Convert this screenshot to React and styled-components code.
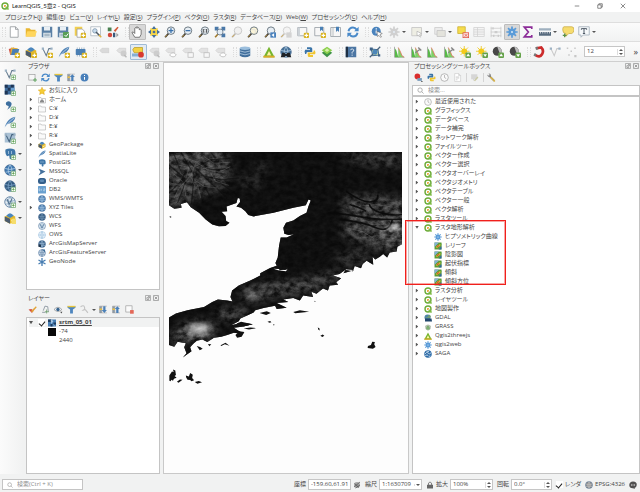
import React from 'react';
import styled, { createGlobalStyle, css } from 'styled-components';

const GlobalStyle = createGlobalStyle`
  * {
    box-sizing: border-box;
  }

  body {
    margin: 0;
    background: #f1f2f2;
    color: #444;
    font: 6px/9px 'Open Sans', 'Noto Sans CJK JP', sans-serif;
    font-kerning: normal;
    font-feature-settings: 'palt';
  }

  button,
  input,
  select {
    margin: 0;
    padding: 0;
    border: 0;
    background: none;
    color: inherit;
    font: inherit;
    font-feature-settings: inherit;
  }
`;

/* ---------- glyphs ---------- */

const Plus = () => (
  <g>
    <rect x="9.5" y="9.5" width="6" height="6" rx="1" fill="#fff" stroke="#5a9a5a" />
    <path d="M12.5 10.8v3.4M10.8 12.5h3.4" stroke="#4d9a3c" />
  </g>
);

const Star = () => (
  <g>
    <rect x="9" y="9" width="7" height="7" rx="1.5" fill="#d9b21c" />
    <path d="M12.5 10v5M10 12.5h5" stroke="#fff" strokeWidth="1.4" />
  </g>
);

const Lens = ({ tint = '#e6edf3', stroke = '#63707a', handle = '#2f2f2f' }) => (
  <g>
    <path d="M6 10 1.5 15" stroke={handle} strokeWidth="2.4" />
    <path d="M4.6 11.5 1.6 14.8" stroke="#d8a63a" strokeWidth="1" />
    <circle cx="9.3" cy="6.2" r="5" fill={tint} stroke={stroke} strokeWidth="1.2" />
  </g>
);

const Globe = ({ fill = '#3f78b0', line = '#b8d3ea' }) => (
  <g>
    <circle cx="8" cy="8" r="7" fill={fill} stroke="#466b92" />
    <path
      d="M1.5 6Q8 8.5 14.5 6M2 11q6-2 12 0M8 1Q3 8 8 15M8 1q5 7 0 14"
      fill="none"
      stroke={line}
    />
  </g>
);

const Histogram = () => (
  <g>
    <path d="M2 1v14h13" fill="none" stroke="#999" />
    <path d="M2.5 15V3l2 3 2 7 2 2z" fill="#57b848" />
    <path d="M7 15V2l3 6 2 5 3 2z" fill="#7ed067" />
    <path d="M7 2l3 6 2 5 3 2" fill="none" stroke="#e46a5a" />
  </g>
);

const Tag = ({ fill = '#c9c9c9' }) => (
  <path d="M1 6l3-3h9v6H4z" fill={fill} stroke="#c3c3c3" strokeWidth="0.6" />
);

const Doc = ({ stroke = '#8b9094' }) => (
  <path d="M3 1h7l3.5 3.5V15H3zM10 1v3.5h3.5" fill="#fff" stroke={stroke} />
);

const Floppy = () => (
  <g>
    <path d="M1 1h14v14H1z" fill="#5b80a5" />
    <rect x="4" y="1" width="8" height="5" fill="#e9eff4" />
    <rect x="3" y="9" width="10" height="6" fill="#dce5ec" />
    <path d="M4.5 11h7M4.5 13h7" stroke="#7f95a8" />
  </g>
);

const Feather = () => (
  <g>
    <path d="M1 15C3 8 8 2 15 1c0 5-5 9-11 10z" fill="#4f82b5" />
    <path d="M1 15Q6 8 14 2" fill="none" stroke="#d5e4f1" strokeWidth="0.9" />
  </g>
);

const Cube = () => (
  <g>
    <path d="M1 6l7-3 7 3v6l-7 3.5L1 12z" fill="#e3b72b" />
    <path d="M1 6l7 3v6.5L1 12z" fill="#4c5c6e" />
    <path d="M3 5q5-7 10 0l-5 3z" fill="#4b86bd" />
    <path d="M9.5 10.5l4-2v2l-4 2z" fill="#fff3b5" />
  </g>
);

const Elephant = () => (
  <g>
    <path d="M2 2q6-3 12 0 2 3 1 8l-3 1-1-1v4q-2 2-3.500 0L7 10l-3 1q-3-3-2-9z" fill="#3e76a8" />
    <path d="M6 4v4M10 4v4" stroke="#b6d0e5" />
  </g>
);

const Vee = ({ stroke = '#63798d' }) => (
  <g>
    <path d="M2.500 3.500 7 13 10.500 3.500h3" fill="none" stroke={stroke} strokeWidth="1.4" />
    <path d="M1 2h3v3H1zM12.500 2h3v3h-3z" fill="#9db2c4" />
  </g>
);

const Python = () => (
  <g>
    <path d="M4 1.500h5q2 0 2 2V8H5q-2 0-2 2.500H1.500Q0 7 1.500 5H8V4H4z" fill="#3b74a8" />
    <path d="M12 14.500H7q-2 0-2-2V8.500h6q2 0 2-2.500h1.500q1.500 3 0 5H8v1h4z" fill="#f0c530" />
  </g>
);

const Gear = ({ fill = '#5a9bd8' }) => (
  <g stroke={fill} strokeWidth="2.300">
    <path d="M8 .5v15M.5 8h15M2.700 2.700l10.600 10.600M13.300 2.700 2.700 13.300" />
    <circle cx="8" cy="8" r="3.600" fill={fill} />
    <circle cx="8" cy="8" r="1.200" fill="#e7f1fa" stroke="none" />
  </g>
);

const Sun = ({ up }) => (
  <g>
    <path d="M7 0v14M0 7h14M2 2l10 10M12 2 2 12" stroke="#edc92c" strokeWidth="1.200" />
    <circle cx="7" cy="7" r="3.800" fill="#f3cb1b" />
    <rect x="8.500" y="8.500" width="7.500" height="7.500" rx="1.500" fill="#65a24a" />
    <path d={up ? 'M12.200 10l2.500 3.500H9.800z' : 'M12.200 14.500l2.500-3.500H9.800z'} fill="#fff" />
  </g>
);

const Contrast = ({ up }) => (
  <g>
    <circle cx="7" cy="7" r="6" fill="#484848" />
    <path d="M7 1a6 6 0 0 1 4 10.500z" fill="#bdbdbd" />
    <rect x="8.500" y="8.500" width="7.500" height="7.500" rx="1.500" fill="#65a24a" />
    <path d={up ? 'M12.200 10l2.500 3.500H9.800z' : 'M12.200 14.500l2.500-3.500H9.800z'} fill="#fff" />
  </g>
);

const Funnel = () => (
  <g>
    <path d="M1 2h14v3l-4.500 3v7h-5V8L1 5z" fill="#4d86bf" />
    <path d="M1 1.500h14v2.500H1z" fill="#e8c63c" />
  </g>
);

const Sync = () => (
  <g fill="none" stroke="#4a8ac9" strokeWidth="2.600">
    <path d="M2 7q1-5 6-5 3 0 5 3M14 9q-1 5-6 5-3 0-5-3" />
    <path d="M15.500 1v6h-6zM.5 15V9h6z" fill="#4a8ac9" stroke="none" />
  </g>
);

const glyphs = {
  qgis: (
    <g>
      <circle cx="8" cy="8" r="6" fill="#fff" stroke="#6cab38" strokeWidth="2.800" />
      <path d="M9 9h2.500l4 4v2.500H13l-4-4z" fill="#7dbb45" />
      <path d="M6 6h4v2L8 10H6z" fill="#f0a94a" />
    </g>
  ),
  new: <Doc />,
  open: (
    <g>
      <path d="M1 3h5l2 2h6v9H1z" fill="#e9b632" />
      <path d="M3 7h13l-3 7H1z" fill="#ffd65c" />
    </g>
  ),
  save: <Floppy />,
  saveAs: (
    <g>
      <Floppy />
      <rect x="8" y="8" width="8" height="8" rx="1" fill="#5a9f56" />
      <path d="M10 12l2 2 3-4" fill="none" stroke="#fff" strokeWidth="1.300" />
    </g>
  ),
  layoutNew: (
    <g>
      <path d="M1 1h10v12H1z" fill="#f2cf4f" />
      <path d="M4 4h7l3 3v8H4z" fill="#fff" stroke="#999" />
      <Star />
    </g>
  ),
  layouts: (
    <g>
      <path d="M1 1h13v12H1z" fill="#fff" stroke="#a7b2ba" />
      <circle cx="6.500" cy="6.500" r="3" fill="#c7daeb" stroke="#7791a8" />
      <path d="M8 8l5 5" stroke="#4e5b66" strokeWidth="2.200" />
      <path d="M12 12l3 3" stroke="#dfb442" strokeWidth="2.200" />
    </g>
  ),
  style: (
    <g>
      <path d="M1 2h5v5H1z" fill="#4a8151" />
      <path d="M9 6l5-5 1.500 1L11 8z" fill="#d35a3a" />
      <circle cx="4" cy="12" r="3" fill="#d2483b" />
      <path d="M8 9h3v6H8z" fill="#38587b" />
      <path d="M12.500 9v6l3-3z" fill="#999" />
    </g>
  ),
  hand: (
    <path
      d="M5 15 1.500 9Q1 7.500 3 8l2 2V3q1-1.500 2 0V1.500q1-1.500 2 0V3q1-1.500 2 0v2q1.500-1.500 2.500 0V11l-2 4z"
      fill="#fff"
      stroke="#555"
    />
  ),
  panSel: (
    <g>
      <path d="M3 3h10v10H3z" fill="#f5d548" />
      <path d="M8 0l3 4H5zM8 16l3-4H5zM0 8l4-3v6zM16 8l-4-3v6z" fill="#466f9c" />
      <circle cx="8" cy="8" r="1.800" fill="#466f9c" />
    </g>
  ),
  zoomIn: (
    <g>
      <Lens />
      <path d="M9.300 3v6.400M6 6.200h6.500" stroke="#3a72ad" strokeWidth="1.700" />
    </g>
  ),
  zoomOut: (
    <g>
      <Lens />
      <path d="M6 6.200h6.500" stroke="#3a72ad" strokeWidth="1.700" />
    </g>
  ),
  zoomNative: (
    <g>
      <Lens />
      <path d="M7 4v5M11.500 4v5M9.200 4.500v1M9.200 7.500v1" stroke="#333" strokeWidth="1.200" />
    </g>
  ),
  zoomFull: (
    <g>
      <path d="M1 1h5v5H1zM10 1h5v5h-5zM10 10h5v5h-5z" fill="#4a78a8" />
      <path d="M6 10 1.500 15" stroke="#a07a2c" strokeWidth="2.200" />
      <circle cx="8" cy="8" r="4" fill="#e1ebf4" stroke="#5d6f80" />
    </g>
  ),
  zoomGrey: <Lens tint="#f0f0f0" stroke="#c4c4c4" handle="#bbb" />,
  zoomLayer: (
    <g>
      <Lens tint="#fbf5d8" />
      <path d="M6 5h5v5" fill="none" stroke="#ddd" />
    </g>
  ),
  zoomLast: (
    <g>
      <Lens />
      <rect x="8.500" y="8.500" width="7.500" height="7" fill="#4780bc" />
      <path d="M10 12l3.500-2.500v5z" fill="#fff" />
    </g>
  ),
  zoomNext: (
    <g>
      <Lens tint="#f4f4f4" stroke="#cfcfcf" handle="#c7c7c7" />
      <rect x="8.500" y="8.500" width="7" height="7" fill="#d3d3d3" />
    </g>
  ),
  mapView: (
    <g>
      <path d="M1 2h12v11H1z" fill="#f7f7f7" stroke="#8f979d" />
      <path d="M1 2h3v11H1z" fill="#cdd3d8" />
      <Star />
    </g>
  ),
  map3d: (
    <g>
      <path d="M1 2h12v11H1z" fill="#f7f7f7" stroke="#8f979d" />
      <path d="M8 1h4v6l-2-2-2 2z" fill="#4a80b5" />
      <Star />
    </g>
  ),
  bookmark: (
    <g>
      <path d="M1 2h13v12H1z" fill="#f7f7f7" stroke="#8f979d" />
      <path d="M4 2v12" stroke="#a7adb2" />
      <path d="M8 1h4v7l-2-2-2 2z" fill="#4a80b5" />
    </g>
  ),
  sync: <Sync />,
  identify: (
    <g>
      <circle cx="7" cy="7" r="6" fill="#4a83bd" />
      <path d="M7 3v1.500M7 6v4" stroke="#fff" strokeWidth="1.600" />
      <path d="M8 7l7 3-3 1.500 2 3-1.500.5-2-2.500-2 1.500z" fill="#fff" stroke="#555" strokeWidth="0.700" />
    </g>
  ),
  gearGrey: <Gear fill="#d0d0d0" />,
  selectGrey: (
    <g>
      <path d="M1 2h13v11H1z" fill="#eeeee4" stroke="#c0c0c0" />
      <path d="M8 7l6 3-2.500 1 1 4-3-3-1.500 1z" fill="#fff" stroke="#b5b5b5" />
    </g>
  ),
  selectForm: (
    <g>
      <path d="M1 2h10v9H1z" fill="#ececec" stroke="#cacaca" />
      <path d="M4 6h11v8H4z" fill="#e3e3dc" stroke="#c2c2c2" />
    </g>
  ),
  deselect: (
    <g>
      <path d="M1 1h10v9H1z" fill="#f5dc4c" stroke="#c9ae2e" />
      <rect x="8" y="9" width="7.500" height="6.500" fill="#fbe4e2" stroke="#e1503f" />
      <path d="M10 10.500l4 4M14 10.500l-4 4" stroke="#e1503f" />
    </g>
  ),
  table: (
    <g stroke="#d0d0d0" fill="#f4f4f4">
      <path d="M1 2h14v12H1z" />
      <path d="M1 5h14M1 8h14M1 11h14M6 2v12" />
    </g>
  ),
  abacus: (
    <g stroke="#c8c8c8" fill="none">
      <path d="M1.500 1v14M14.500 1v14M1 3h14M1 8h14M1 13h14" />
      <path d="M4 1.500v3M7 6.500v3M9 6.500v3M5 11.500v3M11 11.500v3" strokeWidth="1.600" />
    </g>
  ),
  gear: <Gear />,
  sigma: (
    <path d="M13 4V1.500H3L8.500 8 3 14.500h10V12" fill="none" stroke="#8c2c98" strokeWidth="2.200" />
  ),
  measure: (
    <g>
      <path d="M0 3h16v3H0z" fill="#9fb0bf" />
      <path d="M0 8h16v5H0z" fill="#576b7e" />
      <path d="M2 8v2M5 8v2M8 8v2M11 8v2M14 8v2" stroke="#eee" />
    </g>
  ),
  tips: (
    <g>
      <path d="M4 1h9q3 0 3 4t-3 5H9l-4 4v-4q-4 0-4-5t3-4z" fill="#f6dc6e" stroke="#c9ac47" />
      <path d="M3.500 10v5M1 12.500h5" stroke="#5a9148" strokeWidth="1.600" />
    </g>
  ),
  textNote: (
    <g>
      <path d="M1 1h14v11H7l-3 3v-3H1z" fill="#f6f9fb" stroke="#9aa7b3" />
      <path d="M4.500 5V3.500h7V5M8 3.500V10M6.500 10h3" fill="none" stroke="#3d4a57" strokeWidth="1.200" />
    </g>
  ),
  sources: (
    <g>
      <path d="M1 4l7-2 2 8-7 2z" fill="#cf5546" />
      <path d="M4 2l9 1-1 9-9-1z" fill="#e2b13c" />
      <path d="M6 4h9l-2 8H4z" fill="#4a7fb5" />
      <Star />
    </g>
  ),
  geopackageAdd: (
    <g>
      <Cube />
      <Star />
    </g>
  ),
  shapeAdd: (
    <g>
      <Vee />
      <Star />
    </g>
  ),
  featherAdd: (
    <g>
      <Feather />
      <Star />
    </g>
  ),
  memory: (
    <g>
      <path d="M3 2v12M6 2v12M9 2v12M12 2v12" stroke="#8da4b8" />
      <rect x="1" y="4" width="13" height="8" rx="1" fill="#4b7fb3" />
      <Star />
    </g>
  ),
  tagGrey: <Tag fill="#dadada" />,
  tagPin: (
    <g>
      <Tag fill="#e0e0e0" />
      <circle cx="10" cy="10" r="4" fill="#cdcdcd" />
      <path d="M11 12l3 3" stroke="#bbb" strokeWidth="2" />
    </g>
  ),
  tagRed: (
    <g>
      <path d="M1 5l2-3h11v7H3z" fill="#f3d143" stroke="#ba9c25" />
      <path d="M0 10h9v4H0z" fill="#85aed4" />
      <circle cx="12" cy="11.500" r="3.800" fill="#d83a30" />
    </g>
  ),
  tagEye: (
    <g>
      <Tag fill="#e2e2e2" />
      <path d="M6 12q5-6 9 0-4 5-9 0z" fill="#fff" stroke="#b3b3b3" />
    </g>
  ),
  tagMove: (
    <g>
      <Tag fill="#e2e2e2" />
      <rect x="8" y="9" width="7" height="6" fill="#f7f7f7" stroke="#b9b9b9" />
    </g>
  ),
  database: (
    <g>
      <path d="M1 3v10q7 4 14 0V3z" fill="#416f9c" />
      <ellipse cx="8" cy="3" rx="7" ry="2.300" fill="#9bbedd" />
      <path d="M1 6.500q7 3.500 14 0M1 10q7 3.500 14 0" fill="none" stroke="#bdd4e8" />
    </g>
  ),
  threejs: (
    <g>
      <path d="M8 1l7.500 14H.5z" fill="#76b52f" />
      <path d="M8 6.500l3 6H5z" fill="#fff4a3" />
      <path d="M.5 13h15v2.500H.5z" fill="#d9ab26" />
    </g>
  ),
  metasearch: (
    <g>
      <Globe fill="#456f96" />
      <path d="M3 9h3l2 2 2-2h3l2 6h-4.500L8 13l-2.500 2H1z" fill="#1f2226" />
    </g>
  ),
  python: <Python />,
  greenLayers: (
    <g>
      <path d="M8 5l7 4-7 6-7-6z" fill="#3f9247" />
      <path d="M8 1l7 4.500L8 11 1 5.500z" fill="#8bcf4c" />
      <path d="M8 3l3 2.500L8 8 5 5.500z" fill="#d5f0a9" />
    </g>
  ),
  book: (
    <g>
      <path d="M1 1h14v14H1z" fill="#4c76a3" />
      <path d="M1 1h3v14H1z" fill="#1f3044" />
      <path d="M7.500 5.500Q8 3.500 10 4t1.500 2.500L9.500 8.500V10M9.500 11.500V13" fill="none" stroke="#e4edf5" strokeWidth="1.300" />
    </g>
  ),
  network: (
    <g>
      <path d="M3 4l9 1 1 7-8 1z" fill="#dbe7a7" stroke="#3f6b94" strokeWidth="1.400" />
      <path d="M1 15 15 1" stroke="#47627b" strokeWidth="1.600" />
      <circle cx="8" cy="8" r="3.500" fill="#4c86b9" />
      <path d="M1 2h4v4H1zM12 11h3v3h-3z" fill="#3e6287" />
    </g>
  ),
  histogram: <Histogram />,
  histogramTool: (
    <g>
      <Histogram />
      <path d="M7 9l7-5M11 2l4 4" stroke="#888" strokeWidth="2" />
    </g>
  ),
  sunUp: <Sun up />,
  sunDown: <Sun />,
  contrastUp: <Contrast up />,
  contrastDown: <Contrast />,
  magnet: (
    <g fill="none" strokeWidth="3.600">
      <path d="M5 3l6-1q4 4 1 9t-9 1" stroke="#cc2c2c" />
      <path d="M3.500 3.500 6.500 2.500M1.500 11l2.500 1.500" stroke="#777" />
    </g>
  ),
  veeGrey: <Vee stroke="#c9c9c9" />,
  nodesGrey: <path d="M1 2h2v2H1zM11 2h2v2h-2zM6 6h2v2H6zM3 11h2v2H3zM11 12h3v3h-3z" fill="#c7c7c7" />,
  veeAdd: (
    <g>
      <Vee />
      <Plus />
    </g>
  ),
  rasterAdd: (
    <g>
      <path d="M1 1h13v13H1z" fill="#3f6d9d" />
      <path d="M1 1h4v4H1zM9 1h4v4H9zM5 5h4v4H5zM1 9h4v5H1z" fill="#1f3655" />
      <path d="M9 5h5v4H9z" fill="#6da3d3" />
      <Plus />
    </g>
  ),
  commaAdd: (
    <g>
      <path d="M3 3q4-3 7 1 1 5-6 9 3-4 2-5-5-1-3-5z" fill="#3d6f9f" />
      <Plus />
    </g>
  ),
  featherPlus: (
    <g>
      <Feather />
      <Plus />
    </g>
  ),
  virtualAdd: (
    <g>
      <path d="M1 1h14v13H1z" fill="#a9c0d4" />
      <Vee stroke="#44627e" />
      <Plus />
    </g>
  ),
  postgisAdd: (
    <g>
      <Elephant />
      <Plus />
    </g>
  ),
  globeAdd: (
    <g>
      <Globe />
      <Plus />
    </g>
  ),
  wcsAdd: (
    <g>
      <Globe fill="#31597f" line="#7fa6c9" />
      <Plus />
    </g>
  ),
  wfsAdd: (
    <g>
      <Globe fill="#e8eff5" line="#7fa0bd" />
      <path d="M4 4l3 7 4-8" fill="none" stroke="#55738f" strokeWidth="1.400" />
      <Plus />
    </g>
  ),
  cubeAdd: (
    <g>
      <Cube />
      <path d="M10 9h6v7h-6z" fill="#f6dd6c" />
    </g>
  ),
  layerAdd: (
    <g>
      <rect x="1.500" y="2.500" width="11" height="10" fill="#f7f7f7" stroke="#8b8b8b" />
      <path d="M12.500 9v7M9 12.500h7" stroke="#65a864" strokeWidth="1.800" />
    </g>
  ),
  funnel: <Funnel />,
  collapse: (
    <g>
      <path d="M1 2h4v12H1zM5 2h9M5 14h9" fill="#8b9cab" stroke="#999" />
      <path d="M9.500 2l4.500 5h-2.500v7h-4V7H5z" fill="#4a80b8" />
      <path d="M1 6h4v3H1z" fill="#eebf3d" />
    </g>
  ),
  expand: (
    <g>
      <path d="M1 2h4v12H1zM5 2h9M5 14h9" fill="#8b9cab" stroke="#999" />
      <path d="M9.500 14l4.500-5h-2.500V2h-4v7H5z" fill="#4a80b8" />
      <path d="M1 6h4v3H1z" fill="#eebf3d" />
    </g>
  ),
  info: (
    <g>
      <circle cx="8" cy="8" r="7" fill="#4a80ba" />
      <path d="M8 3.500v2M8 7v5" stroke="#fff" strokeWidth="1.800" />
    </g>
  ),
  favorite: (
    <path d="M8 .5l2.300 5 5.200.6-3.900 3.600 1.100 5.300L8 12.300 3.300 15l1.100-5.300L.5 6.100l5.200-.6z" fill="#f5cd35" stroke="#dfa51b" />
  ),
  home: (
    <g>
      <path d="M1 3h5l1 2h8v9H1z" fill="#fafafa" stroke="#9c9c9c" />
      <path d="M4 10l4-4 4 4v3H4z" fill="#8b8b8b" />
    </g>
  ),
  folder: <path d="M1 2h5l1 2h8v10H1z" fill="#fafafa" stroke="#a3a3a3" />,
  cube: <Cube />,
  feather: <Feather />,
  elephant: <Elephant />,
  mssql: <path d="M1 1l14 6-14 8 4-7z" fill="#44719d" />,
  oracle: (
    <g>
      <rect y="2" width="16" height="12" rx="5" fill="#345f8b" />
      <rect x="4" y="5" width="8" height="5" rx="2" fill="#5c8ab5" />
    </g>
  ),
  db2: (
    <g>
      <rect width="16" height="15" rx="1" fill="#6aa0cf" />
      <path d="M2 5.500v4h2v-4zM7 5.500v4M11 5.500h3v2h-3v2h3" fill="none" stroke="#d4e6f4" />
    </g>
  ),
  globe: <Globe fill="#4c80b4" />,
  globeDark: <Globe fill="#35597d" line="#85a8c8" />,
  globeVee: (
    <g>
      <Globe fill="#e5eef6" line="#9dbad3" />
      <path d="M4 4l4 8 4-8" fill="none" stroke="#4e7397" strokeWidth="1.500" />
    </g>
  ),
  globeLight: (
    <g fill="#eaf3fa" stroke="#8db6d8">
      <circle cx="8" cy="8" r="7" />
      <path d="M1 8h14M8 1Q3 8 8 15M8 1q5 7 0 14" fill="none" />
    </g>
  ),
  arcgis: (
    <g>
      <Globe fill="#3e658b" />
      <path d="M1 9h5v5H1z" fill="#22364c" />
    </g>
  ),
  arcgisFeature: (
    <g>
      <Globe fill="#cfe0ee" line="#54779a" />
      <path d="M8 1h6v6z" fill="#3f6d99" />
    </g>
  ),
  geonode: <path d="M8 0v16M1 4l14 8M15 4 1 12" stroke="#467cb1" strokeWidth="2.600" />,
  brush: (
    <g>
      <path d="M1 8l6 6 3-4-4-3z" fill="#d6503c" />
      <path d="M5 11l9-9 1.500 2L8 13z" fill="#e1a33a" />
    </g>
  ),
  groupAdd: (
    <g fill="none" stroke="#76828d" strokeWidth="1.300">
      <path d="M2 13h6M4 10l3-8 5 1 1 9" />
      <path d="M10 8v7M7 12h7" stroke="#5f955d" />
    </g>
  ),
  eye: (
    <g>
      <path d="M0 8q7-8 14 0-7 7-14 0z" fill="#eef4f9" stroke="#777" />
      <circle cx="7" cy="8" r="3" fill="#37648f" />
      <path d="M11 12h4l-2 3z" fill="#444" />
    </g>
  ),
  filterGrey: (
    <path d="M1 3q6-4 7 1T6 9q3-2 5 1l3 4" fill="none" stroke="#c3c3c3" strokeWidth="2" />
  ),
  remove: (
    <g>
      <rect x="1.500" y="1.500" width="11" height="11" fill="#fbfbfb" stroke="#888" />
      <path d="M9 9h6.500v6.500H9z" fill="#e36858" />
    </g>
  ),
  raster: (
    <g>
      <path d="M0 1h16v14H0z" fill="#477db2" />
      <path d="M0 1h6v5H0zM8 6l5-5M5 10h4v5H5zM11 7h5v4h-5z" fill="#1e3c5f" />
      <path d="M6 2l4 2-3 5zM10 11l4 3" fill="#b7d3eb" stroke="#b7d3eb" />
    </g>
  ),
  model: (
    <g>
      <circle cx="6" cy="6" r="5" fill="#d92d2d" />
      <path d="M6 9h8v5H6z" fill="#789bbb" />
      <path d="M12 14h4l-2 2z" fill="#333" />
    </g>
  ),
  history: (
    <g fill="none" stroke="#9b9b9b" strokeWidth="1.200">
      <circle cx="8" cy="8" r="6.800" fill="#fafafa" />
      <path d="M8 3.500V8l3 2" />
    </g>
  ),
  results: (
    <g>
      <Doc stroke="#c5c5c5" />
      <path d="M5 7h6M5 9h6M5 12h3" stroke="#b5b5b5" />
    </g>
  ),
  editGrey: (
    <g>
      <path d="M2 2h11v9H8l-2 3-1-3H2z" fill="#d6d6d6" />
      <path d="M8 14l6-7" stroke="#c9c9a4" strokeWidth="2.500" />
    </g>
  ),
  wrench: (
    <g>
      <path d="M3 4l10 10" stroke="#666" strokeWidth="3" />
      <path d="M6 7l8 8" stroke="#dfb947" strokeWidth="2.500" />
      <circle cx="4" cy="4" r="3" fill="#8b8b8b" />
      <path d="M1 1l3 3" stroke="#f0f0f0" strokeWidth="2" />
    </g>
  ),
  dem: (
    <g>
      <path d="M1 1h14v14H1z" fill="#6a9b3d" />
      <path d="M1 1h9L1 10z" fill="#84b2d8" />
      <path d="M15 8v7H9z" fill="#2d66a0" />
      <path d="M3 13Q2 8 8 5t6-2q1 4-3 7t-8 3z" fill="#e8b935" stroke="#3d9e35" strokeWidth="1.800" />
      <path d="M5 11q0-4 6-6-1 5-6 6z" fill="#d1583a" />
    </g>
  ),
  gdal: (
    <g>
      <circle cx="7" cy="7" r="6" fill="#4f86a8" />
      <path d="M1 8l6-2 3-5 4 3-2 4z" fill="#6f9d76" />
      <path d="M2 9h13l1 6H2z" fill="#23476d" />
    </g>
  ),
  grass: (
    <g>
      <path d="M2 6q6-6 12 0l-1 6-5 3.500-5-3.500z" fill="#b6c1b3" />
      <path d="M5 13q-1-6 3-8 4 3 3 8z" fill="#5d9c4f" />
      <path d="M8 13V7" stroke="#e7f2df" />
    </g>
  ),
  saga: (
    <g>
      <circle cx="8" cy="8" r="7.500" fill="#2d6ca8" />
      <path d="M2 8q4-6 6-2t7-1M2 12q5-4 6-1t5 1M5 2q2 2 5 1" fill="none" stroke="#e3eef7" strokeWidth="1.500" />
    </g>
  ),
  search: (
    <g fill="none" stroke="#8d8d8d" strokeWidth="1.500">
      <circle cx="7" cy="7" r="5" />
      <path d="M11 11l4 4" />
    </g>
  ),
  extents: (
    <g>
      <circle cx="8" cy="8" r="6" fill="#a5a5a5" />
      <path d="M3 5l9 8M2 12 14 2M5 14l9-6" stroke="#454545" strokeWidth="1.300" />
    </g>
  ),
  lock: (
    <g>
      <path d="M5 8V4q3-4 6 0v4" fill="none" stroke="#7b7b7b" strokeWidth="1.800" />
      <path d="M2 7.500h12V15H2z" fill="#666" />
    </g>
  ),
  crs: <Globe fill="#8e8e8e" line="#d1d1d1" />,
  message: (
    <g>
      <path d="M8 1q8 0 7.500 7Q15 13 11 14l1 2-4-1.500Q1 15 .5 8 1 1 8 1z" fill="#505050" />
      <path d="M4 8h2M7 8h2M10 8h2" stroke="#fff" strokeWidth="1.800" />
    </g>
  ),
  min: <path d="M2 8h12" stroke="#333" strokeWidth="1.500" />,
  restore: <path d="M2 5h9v9H2zM5 5V2h9v9h-3" fill="none" stroke="#333" strokeWidth="1.500" />,
  close: <path d="M2 2l12 12M14 2 2 14" stroke="#333" strokeWidth="1.500" />,
  dockFloat: (
    <g fill="none" stroke="#777" strokeWidth="1.600">
      <rect x="1" y="1" width="14" height="14" rx="2" />
      <path d="M5 7h5v5H5zM8 4h4v4" />
    </g>
  ),
  dockClose: (
    <g fill="none" stroke="#777" strokeWidth="1.800">
      <rect x="1" y="1" width="14" height="14" rx="2" />
      <path d="M4.500 4.500l7 7M11.500 4.500l-7 7" />
    </g>
  ),
};

const Svg = styled.svg`
  display: block;
  flex: none;
  width: ${({ $size }) => $size}px;
  height: ${({ $size }) => $size}px;
`;

const Icon = ({ name, size = 12 }) => (
  <Svg $size={size} viewBox="0 0 16 16" aria-hidden="true">
    {glyphs[name]}
  </Svg>
);

/* ---------- window chrome ---------- */

const Window = styled.div`
  display: flex;
  flex-direction: column;
  height: 100vh;
`;

const TitleBar = styled.header`
  display: flex;
  align-items: center;
  gap: 3px;
  height: 12px;
  padding: 0 14px 0 1px;
  background: #fff;
`;

const Title = styled.h1`
  flex: 1;
  margin: 0;
  font: 400 6px/12px Lato, 'Noto Sans CJK JP', sans-serif;
  color: #222;
`;

const WindowButtons = styled.div`
  display: flex;
  gap: 17px;
`;

const MenuBar = styled.nav`
  display: flex;
  gap: 4px;
  height: 10px;
  padding: 0 5px;
  background: #f1f2f2;
`;

const MenuButton = styled.button`
  line-height: 10px;
  white-space: nowrap;
`;

const Bar = styled.div`
  display: flex;
  align-items: center;
  gap: 4px;
  height: ${({ $height }) => $height}px;
  padding: 0 2px;
  border-top: 1px solid #dedede;
  background: linear-gradient(#fbfbfb, #f1f2f2);
`;

const Group = styled.div`
  display: flex;
  align-items: center;
  width: ${({ $width }) => $width}px;
`;

const Grip = styled.span`
  width: 4px;
  height: 10px;
  border: 1px dotted #dcdcdc;
  border-width: 0 1px;
`;

const ToolButton = styled.button`
  display: flex;
  flex: 1 1 ${({ $menu }) => ($menu ? 23 : 16)}px;
  align-items: center;
  justify-content: center;
  gap: 2px;
  min-width: 0;
  height: 16px;
  ${({ $active }) =>
    $active &&
    css`
      border: 1px solid ${$active === 'blue' ? '#9fbbd6' : '#bdbdbd'};
      border-radius: 1px;
      background: ${$active === 'blue' ? '#e2ebf3' : '#d8d8d8'};
    `}
`;

const Caret = styled.span`
  flex: none;
  border: 2px solid transparent;
  border-top-color: #555;
  border-bottom-width: 0;
`;

const More = styled.button`
  margin-left: auto;
  font-size: 9px;
`;

const Tools = ({ items, width }) => (
  <Group $width={width}>
    <Grip />
    {items.map(({ icon, label, menu, active }) => (
      <ToolButton key={label} aria-label={label} $menu={menu} $active={active}>
        <Icon name={icon} />
        {menu && <Caret />}
      </ToolButton>
    ))}
  </Group>
);

/* ---------- docks ---------- */

const Workspace = styled.main`
  display: flex;
  flex: 1;
  gap: 3px;
  min-height: 0;
  border-top: 1px solid #cfcfcf;
`;

const SideBar = styled.div`
  display: flex;
  flex: none;
  flex-direction: column;
  width: 23px;
  padding: 4px 0 0 4px;
  background: linear-gradient(90deg, #fbfbfb, #f1f2f2);
`;

const SideButton = styled.button`
  display: flex;
  align-items: center;
  gap: 2px;
  height: 16px;
`;

const Column = styled.div`
  display: flex;
  flex: 1 1 ${({ $basis }) => $basis}px;
  flex-direction: column;
  gap: 4px;
  min-width: 0;
`;

const Dock = styled.section`
  display: flex;
  flex: ${({ $grow = 1 }) => $grow} 1 0;
  flex-direction: column;
  min-height: 0;
`;

const DockHeader = styled.header`
  display: flex;
  align-items: center;
  gap: 2px;
  height: 8px;
  padding: 0 1px 0 2px;
`;

const DockTitle = styled.h2`
  flex: 1;
  margin: 0;
  font-size: 6px;
  font-weight: 400;
`;

const DockTools = styled.div`
  display: flex;
  align-items: center;
  height: 15px;
  padding-left: 2px;
`;

const DockTool = styled.button`
  display: flex;
  align-items: center;
  gap: 3px;
  width: ${({ $menu }) => ($menu ? 19 : 13)}px;
`;

const Divider = styled.span`
  width: 1px;
  height: 9px;
  margin-right: 3px;
  background: #d4d4d4;
`;

const Tree = styled.ul`
  flex: 1;
  min-height: 0;
  margin: 0;
  padding: 0 0 0 2px;
  overflow: hidden;
  border: 1px solid #c4c4c4;
  background: #fff;
  list-style: none;
`;

const Row = styled.li`
  display: flex;
  align-items: center;
  gap: 3px;
  height: 9px;
  padding-left: ${({ $depth = 0 }) => $depth * 10}px;
  white-space: nowrap;
  background: ${({ $shaded }) => ($shaded ? '#f1f2f2' : 'none')};
`;

const Toggle = styled.span`
  flex: none;
  width: 4px;
  height: 4px;
  margin-right: 2px;
  background: ${({ $state }) => ($state ? '#555' : 'none')};
  clip-path: ${({ $state }) =>
    $state === 'open' ? 'polygon(0 0, 100% 0, 50% 80%)' : 'polygon(20% 0, 80% 50%, 20% 100%)'};
`;

const LayerName = styled.label`
  font-weight: 700;
  text-decoration: underline;
`;

const Swatch = styled.span`
  width: 8px;
  height: 8px;
  margin-left: 9px;
  background: ${({ $color }) => $color};
`;

const Check = styled.input`
  display: grid;
  flex: none;
  place-items: center;
  width: 7px;
  height: 7px;
  appearance: none;
  background: #fff;

  &:checked::before {
    content: '';
    width: 3px;
    height: 5px;
    border: solid #222;
    border-width: 0 1px 1px 0;
    transform: rotate(40deg);
  }
`;

const SearchBox = styled.label`
  display: flex;
  align-items: center;
  gap: 4px;
  width: ${({ $width }) => $width};
  height: 11px;
  padding: 0 4px;
  border: 1px solid #c4c4c4;
  background: #fff;

  input {
    flex: 1;
    min-width: 0;
    outline: 0;
  }

  input::placeholder {
    color: #8c8c8c;
  }
`;

const Panel = ({ title, tools, grow, children }) => (
  <Dock $grow={grow}>
    <DockHeader>
      <DockTitle>{title}</DockTitle>
      <button aria-label="Float">
        <Icon name="dockFloat" size={6} />
      </button>
      <button aria-label="Close">
        <Icon name="dockClose" size={6} />
      </button>
    </DockHeader>
    <DockTools>
      {tools.map(({ icon, label, menu, divided }) => (
        <React.Fragment key={label}>
          {divided && <Divider />}
          <DockTool aria-label={label} $menu={menu}>
            <Icon name={icon} size={9} />
            {menu && <Caret />}
          </DockTool>
        </React.Fragment>
      ))}
    </DockTools>
    {children}
  </Dock>
);

/* ---------- map ---------- */

const MapCanvas = styled.section`
  display: flex;
  flex: 1 1 246px;
  align-items: center;
  justify-content: center;
  min-width: 0;
  padding: 12px 6px 0 5px;
  border: 1px solid #c9c9c9;
  background: #fdfdfd;

  svg {
    display: block;
    width: 100%;
  }
`;

const LAND =
  'M24 21H729V300L715 308 713 322 692 325 684 340 672 330 662 338 648 346 640 338 642 362 622 350 610 360 605 373 586 366 580 382 558 378 552 388 585 378 560 376 540 390 520 395 545 403 530 415 536 423 510 425 505 440 490 434 470 450 455 444 460 460 430 455 420 470 400 463 370 467 385 475 350 478 380 492 350 496 345 486 310 493 285 500 280 507 262 515 240 525 235 533 212 545 245 538 277 542 245 550 220 553 250 572 220 568 200 575 182 580 160 583 140 596 125 588 108 592 97 602 88 612 92 624 75 636 66 643 77 630 70 612 75 600 50 595 40 610 24 605V522L45 510 80 500 130 490 155 475 172 467 200 470 216 473 210 460 215 440 235 425 270 410 300 395 300 388 330 372 350 365 346 357 353 340 357 305 362 280 380 280 402 270 386 272 373 268 370 250 378 235 400 228 420 215 440 205 446 185 453 168 446 165 438 182 400 190 340 205 280 216 264 212 255 200 242 190 228 186 239 172 238 162 232 160 228 175 215 180 198 186 200 200 183 202 195 215 197 230 207 235 195 245 175 246 155 240 135 225 115 205 90 188 78 173 60 178 62 190 40 193 24 182Z';

const ISLETS =
  'M298 508l22-5 12 5-14 6zM400 505l20-5 28 4-20 3-22 2zM322 535l8-3 4 4-6 2zM474 552l5 2 1 7-4-2zM482 577l7-4 5 4-6 4zM626 608l9-3 4-10 8 1-2 7 4 8-8 5-16-2zM25 697l8-12 5 2-2-8 7 3 2 14-4 3 6 5-8 3-3 6-5-3-2 5-4-2zM48 716l9-7 8 1-12 9zM75 697l9 3 4-10 8 5-2 10 6 7-8 3-4-4-8-1-4-7zM102 717l12-3 10 4-14 4zM108 608l10 3 8 5-9 5zM142 602l10 1-6 6zM180 606l15-8 12 9-14-4-11 5zM225 575l12-12 15 3-8 14-14 3zM250 555l20-3 18 2-22 4zM228 540l14-5 36 7-28 7zM26 215l6 3-5 2zM338 542l6 2-3 2zM464 471l4 2-3 2zM355 355l12 9-2 9 25 2-32 4z';

const RIVERS =
  'M505 205Q560 208 610 218T729 224M560 140Q610 175 635 172T655 150M630 178Q632 195 665 205T729 210M540 225Q610 232 650 250T700 225M570 180Q600 188 620 200';

const RIDGES =
  'M105 55L90 95 100 120M90 92L55 130 40 160M100 105L130 125 170 130M105 50L140 75 200 85M50 60L85 68 75 100M65 35L105 50M150 85L165 110 205 122M70 120L75 155M110 120L120 160M32 82L65 110M180 80L210 65M130 35L160 55 210 52M28 115L60 122M125 72L155 65M600 185L650 180 700 188M560 250L610 262 640 280M640 240L700 238';

const VALLEYS =
  'M60 22L100 90 92 180M24 60L70 100M85 50L130 95 200 160M120 92L180 105 235 100M100 70L150 45 210 40M130 120L150 160M24 145L60 110 75 80M75 110L50 175M165 105L215 140M40 30L60 80M150 22L165 40M150 75L205 72';

const Terrain = () => (
  <svg viewBox="24 21 705 740" role="img" aria-label="srtm_05_01">
    <defs>
      <clipPath id="land">
        <path d={LAND} />
      </clipPath>
      <filter id="relief" x="0" y="0" width="750" height="700" filterUnits="userSpaceOnUse" colorInterpolationFilters="sRGB">
        <feTurbulence type="fractalNoise" baseFrequency="0.050 0.065" numOctaves="4" seed="5" />
        <feColorMatrix values="1.900 0 0 0 -0.450  1.900 0 0 0 -0.450  1.900 0 0 0 -0.450  0 0 0 0 1" result="noise" />
        <feGaussianBlur in="SourceGraphic" stdDeviation="15" result="height" />
        <feComposite in="noise" in2="height" operator="arithmetic" k1="0.620" k3="0.080" k4="0.020" />
      </filter>
      <radialGradient id="peak">
        <stop stopColor="#fff" stopOpacity="0.750" />
        <stop offset="1" stopColor="#fff" stopOpacity="0" />
      </radialGradient>
    </defs>
    <path d={LAND} fill="#0b0b0b" />
    <g clipPath="url(#land)">
      <g filter="url(#relief)">
        <rect width="750" height="700" fill="#121212" />
        <path d="M0 0H190L215 90 170 140 120 150 50 190H0z" fill="#7b7b7b" />
        <path d="M235 95l60 5 10 25-60-5zM285 58h40v20h-40z" fill="#5a5a5a" />
        <path d="M540 25h189v40l-90-5-60-10z" fill="#6a6a6a" />
        <path d="M540 165l90-15 120 15v160l-80-5-70-25-60-30 30-40z" fill="#808080" />
        <path d="M670 235l79-10v40l-70 20z" fill="#c8c8c8" />
        <path d="M520 335l100-20 20 25-80 30z" fill="#606060" />
        <path d="M240 445l60-25 150-20 90-20v30l-80 35-120 15-90 15z" fill="#777" />
        <path d="M245 435l60-10 10 40-60 10z" fill="#959595" />
        <path d="M165 495l90-5 10 30-80 15z" fill="#777" />
        <path d="M30 575l50-40 70 0 20 30-40 30-100 5z" fill="#999" />
      </g>
      <path d={VALLEYS} fill="none" stroke="#0c0c0c" strokeWidth="4" strokeOpacity="0.600" />
      <path d={RIDGES} fill="none" stroke="#888" strokeWidth="3" strokeOpacity="0.300" />
      <path d={RIVERS} fill="none" stroke="#090909" strokeWidth="5" strokeOpacity="0.900" />
      <ellipse cx="115" cy="556" rx="50" ry="27" fill="url(#peak)" />
      <ellipse cx="703" cy="250" rx="26" ry="15" fill="url(#peak)" opacity="0.700" />
      <ellipse cx="278" cy="454" rx="34" ry="22" fill="url(#peak)" opacity="0.350" />
      <path d="M275 397l15-12 10 3-10 10zM340 374l15 1 20 3 8-4-5 8-24-3z" fill="#fdfdfd" />
    </g>
    <path d={ISLETS} fill="#111" />
  </svg>
);

/* ---------- status bar ---------- */

const StatusBar = styled.footer`
  display: flex;
  align-items: center;
  gap: 3px;
  height: 18px;
  padding: 3px 3px 0 2px;
`;

const Spacer = styled.span`
  flex: 1;
`;

const Field = styled.div`
  display: flex;
  align-items: center;
  gap: 2px;
  margin-right: 1px;
  white-space: nowrap;
`;

const Box = styled.div`
  display: flex;
  align-items: center;
  width: ${({ $width }) => $width}px;
  height: 11px;
  padding-left: 2px;
  border: 1px solid #c6c6c6;
  background: #fff;

  input,
  select {
    flex: 1;
    min-width: 0;
    appearance: none;
  }
`;

const Stepper = styled.span`
  display: flex;
  flex: none;
  flex-direction: column;
  align-items: center;
  gap: 2px;
  width: 7px;
  border-left: 1px solid #ddd;
`;

const CaretUp = styled(Caret)`
  transform: rotate(180deg);
`;

const Steps = () => (
  <Stepper>
    <CaretUp />
    <Caret />
  </Stepper>
);

const Highlight = styled.div`
  position: absolute;
  inset: 124px 134px auto -7px;
  height: 65px;
  border: 1px solid #f0201c;
  outline: 1px solid rgba(240, 32, 28, 0.4);
  outline-offset: -2px;
  pointer-events: none;
`;

const ToolboxTree = styled.div`
  position: relative;
  display: flex;
  flex: 1;
  flex-direction: column;
  min-height: 0;
`;

/* ---------- data ---------- */

const menus = [
  ['プロジェクト', 'J'],
  ['編集', 'E'],
  ['ビュー', 'V'],
  ['レイヤ', 'L'],
  ['設定', 'S'],
  ['プラグイン', 'P'],
  ['ベクタ', 'O'],
  ['ラスタ', 'R'],
  ['データベース', 'D'],
  ['Web', 'W'],
  ['プロセッシング', 'C'],
  ['ヘルプ', 'H'],
];

const tool = (icon, label, extra) => ({ icon, label, ...extra });
const menu = { menu: true };
const active = { active: 'grey' };

const projectBar = [
  [119, [
    tool('new', 'New'), tool('open', 'Open'), tool('save', 'Save'), tool('saveAs', 'Save as'),
    tool('layoutNew', 'New layout'), tool('layouts', 'Layouts'), tool('style', 'Style manager'),
  ]],
  [236, [
    tool('hand', 'Pan', active), tool('panSel', 'Pan to selection'), tool('zoomIn', 'Zoom in'),
    tool('zoomOut', 'Zoom out'), tool('zoomNative', 'Native zoom'), tool('zoomFull', 'Zoom full'),
    tool('zoomGrey', 'Zoom to selection'), tool('zoomLayer', 'Zoom to layer'),
    tool('zoomLast', 'Zoom last'), tool('zoomNext', 'Zoom next'), tool('mapView', 'New map view'),
    tool('map3d', 'New bookmark'), tool('bookmark', 'Bookmarks'), tool('sync', 'Refresh'),
  ]],
  [234, [
    tool('identify', 'Identify'), tool('gearGrey', 'Action', menu), tool('selectGrey', 'Select', menu),
    tool('selectForm', 'Select by form', menu), tool('deselect', 'Deselect'),
    tool('table', 'Attribute table'), tool('abacus', 'Field calculator'),
    tool('gear', 'Toolbox', active), tool('sigma', 'Statistics'), tool('measure', 'Measure', menu),
    tool('tips', 'Map tips'), tool('textNote', 'Annotation', menu),
  ]],
];

const layerBar = [
  [87, [
    tool('sources', 'Data sources'), tool('geopackageAdd', 'New GeoPackage'),
    tool('shapeAdd', 'New shapefile'), tool('featherAdd', 'New SpatiaLite'), tool('memory', 'New scratch layer'),
  ]],
  [136, [
    tool('tagGrey', 'Labels'), tool('tagPin', 'Diagrams'),
    tool('tagRed', 'Highlight labels', { active: 'blue' }),
    tool('tagPin', 'Pin labels'), tool('tagEye', 'Show labels'), tool('tagMove', 'Move label'),
    tool('tagMove', 'Rotate label'), tool('tagEye', 'Change label'),
  ]],
  [20, [tool('database', 'DB manager')]],
  [37, [tool('threejs', 'Qgis2threejs'), tool('metasearch', 'MetaSearch')]],
  [37, [tool('python', 'Python'), tool('greenLayers', 'Plugin layers')]],
  [20, [tool('book', 'Help')]],
  [20, [tool('network', 'Topology')]],
  [136, [
    tool('histogram', 'Local stretch'), tool('histogramTool', 'Full stretch'),
    tool('histogram', 'Local cumulative'), tool('histogramTool', 'Full cumulative'),
    tool('sunUp', 'Brighter'), tool('sunDown', 'Darker'),
    tool('contrastUp', 'More contrast'), tool('contrastDown', 'Less contrast'),
  ]],
  [53, [tool('magnet', 'Snapping'), tool('veeGrey', 'Vertices'), tool('nodesGrey', 'Nodes')]],
];

const sideTools = [
  tool('veeAdd', 'Add vector'),
  tool('rasterAdd', 'Add raster'),
  tool('commaAdd', 'Add text'),
  tool('featherPlus', 'Add SpatiaLite'),
  tool('virtualAdd', 'Add virtual'),
  tool('postgisAdd', 'Add PostGIS', menu),
  tool('globeAdd', 'Add WMS', menu),
  tool('wcsAdd', 'Add WCS'),
  tool('wfsAdd', 'Add WFS', menu),
  tool('cubeAdd', 'Add package', menu),
];

const browserTools = [
  tool('layerAdd', 'Add'), tool('sync', 'Refresh'), tool('funnel', 'Filter'),
  tool('collapse', 'Collapse'), tool('info', 'Properties'),
];

const layerTools = [
  tool('brush', 'Styling'), tool('groupAdd', 'Add group'), tool('eye', 'Themes'), tool('funnel', 'Filter'),
  tool('filterGrey', 'Expression', menu), tool('expand', 'Expand'), tool('collapse', 'Collapse'),
  tool('remove', 'Remove'),
];

const toolboxTools = [
  tool('model', 'Models'), tool('python', 'Scripts'), tool('history', 'History'), tool('results', 'Results'),
  tool('editGrey', 'Edit in place', { divided: true }), tool('wrench', 'Options', { divided: true }),
];

const browserItems = [
  ['favorite', 'お気に入り'],
  ['home', 'ホーム', 'closed'],
  ['folder', 'C:¥', 'closed'],
  ['folder', 'D:¥', 'closed'],
  ['folder', 'E:¥', 'closed'],
  ['folder', 'R:¥', 'closed'],
  ['cube', 'GeoPackage', 'closed'],
  ['feather', 'SpatiaLite'],
  ['elephant', 'PostGIS'],
  ['mssql', 'MSSQL'],
  ['oracle', 'Oracle'],
  ['db2', 'DB2'],
  ['globe', 'WMS/WMTS'],
  ['globe', 'XYZ Tiles', 'closed'],
  ['globeDark', 'WCS'],
  ['globeVee', 'WFS'],
  ['globeLight', 'OWS'],
  ['arcgis', 'ArcGisMapServer'],
  ['arcgisFeature', 'ArcGisFeatureServer'],
  ['geonode', 'GeoNode'],
];

const toolboxItems = [
  ['history', '最近使用された', 'closed'],
  ['qgis', 'グラフィックス', 'closed'],
  ['qgis', 'データベース', 'closed'],
  ['qgis', 'データ補完', 'closed'],
  ['qgis', 'ネットワーク解析', 'closed'],
  ['qgis', 'ファイルツール', 'closed'],
  ['qgis', 'ベクター作成', 'closed'],
  ['qgis', 'ベクター選択', 'closed'],
  ['qgis', 'ベクタオーバーレイ', 'closed'],
  ['qgis', 'ベクタジオメトリ', 'closed'],
  ['qgis', 'ベクタテーブル', 'closed'],
  ['qgis', 'ベクター一般', 'closed'],
  ['qgis', 'ベクタ解析', 'closed'],
  ['qgis', 'ラスタツール', 'closed'],
  ['qgis', 'ラスタ地形解析', 'open'],
  ['gear', 'ヒプソメトリック曲線', null, 1],
  ['dem', 'レリーフ', null, 1],
  ['dem', '陰影図', null, 1],
  ['dem', '起伏指標', null, 1],
  ['dem', '傾斜', null, 1],
  ['dem', '傾斜方位', null, 1],
  ['qgis', 'ラスタ分析', 'closed'],
  ['qgis', 'レイヤツール', 'closed'],
  ['qgis', '地図製作', 'closed'],
  ['gdal', 'GDAL', 'closed'],
  ['grass', 'GRASS', 'closed'],
  ['threejs', 'Qgis2threejs', 'closed'],
  ['gear', 'qgis2web', 'closed'],
  ['saga', 'SAGA', 'closed'],
];

const Items = ({ items }) => (
  <Tree>
    {items.map(([icon, label, state, depth]) => (
      <Row key={label} $depth={depth}>
        <Toggle $state={state} />
        <Icon name={icon} size={8} />
        {label}
      </Row>
    ))}
  </Tree>
);

const App = () => (
  <Window>
    <GlobalStyle />
    <TitleBar>
      <Icon name="qgis" size={8} />
      <Title>LearnQGIS_5章2 - QGIS</Title>
      <WindowButtons>
        {['min', 'restore', 'close'].map((name) => (
          <button key={name} aria-label={name}>
            <Icon name={name} size={6} />
          </button>
        ))}
      </WindowButtons>
    </TitleBar>
    <MenuBar>
      {menus.map(([label, key]) => (
        <MenuButton key={label}>
          {label}(<u>{key}</u>)
        </MenuButton>
      ))}
    </MenuBar>
    <Bar $height={19}>
      {projectBar.map(([width, items]) => (
        <Tools key={items[0].label} width={width} items={items} />
      ))}
    </Bar>
    <Bar $height={20}>
      {layerBar.map(([width, items]) => (
        <Tools key={items[0].label} width={width} items={items} />
      ))}
      <Box $width={41}>
        <input aria-label="Tolerance" defaultValue="12" />
        <Steps />
      </Box>
      <More aria-label="More">»</More>
    </Bar>

    <Workspace>
      <SideBar>
        {sideTools.map(({ icon, label, menu: hasMenu }) => (
          <SideButton key={label} aria-label={label}>
            <Icon name={icon} />
            {hasMenu && <Caret />}
          </SideButton>
        ))}
      </SideBar>

      <Column $basis={134}>
        <Panel title="ブラウザ" tools={browserTools} grow={14}>
          <Items items={browserItems} />
        </Panel>
        <Panel title="レイヤー" tools={layerTools} grow={11}>
          <Tree>
            <Row $shaded>
              <Toggle $state="open" />
              <Check type="checkbox" id="srtm" defaultChecked />
              <Icon name="raster" size={8} />
              <LayerName htmlFor="srtm">srtm_05_01</LayerName>
            </Row>
            <Row $depth={1}>
              <Swatch $color="#080808" />
              -74
            </Row>
            <Row $depth={1}>
              <Swatch $color="#fff" />
              2440
            </Row>
          </Tree>
        </Panel>
      </Column>

      <MapCanvas>
        <Terrain />
      </MapCanvas>

      <Column $basis={228}>
        <Panel title="プロセッシングツールボックス" tools={toolboxTools}>
          <SearchBox $width="100%">
            <Icon name="search" size={7} />
            <input aria-label="検索" placeholder="検索..." />
          </SearchBox>
          <ToolboxTree>
            <Items items={toolboxItems} />
            <Highlight />
          </ToolboxTree>
        </Panel>
      </Column>
    </Workspace>

    <StatusBar>
      <SearchBox $width="81px">
        <Icon name="search" size={6} />
        <input aria-label="検索" placeholder="検索(Ctrl + K)" />
      </SearchBox>
      <Spacer />
      <Field>
        <label htmlFor="coords">座標</label>
        <Box $width={43}>
          <input id="coords" defaultValue="-159.60,61.91" />
        </Box>
        <Icon name="extents" size={8} />
      </Field>
      <Field>
        <label htmlFor="scale">縮尺</label>
        <Box $width={43}>
          <select id="scale">
            <option>1:1630709</option>
          </select>
          <Stepper>
            <Caret />
          </Stepper>
        </Box>
      </Field>
      <Field>
        <Icon name="lock" size={8} />
        <label htmlFor="zoom">拡大</label>
        <Box $width={43}>
          <input id="zoom" defaultValue="100%" />
          <Steps />
        </Box>
      </Field>
      <Field>
        <label htmlFor="rotation">回転</label>
        <Box $width={41}>
          <input id="rotation" defaultValue="0.0°" />
          <Steps />
        </Box>
      </Field>
      <Field>
        <Check type="checkbox" id="render" defaultChecked />
        <label htmlFor="render">レンダ</label>
      </Field>
      <Field>
        <Icon name="crs" size={8} />
        EPSG:4326
      </Field>
      <Icon name="message" size={8} />
    </StatusBar>
  </Window>
);

export default App;
